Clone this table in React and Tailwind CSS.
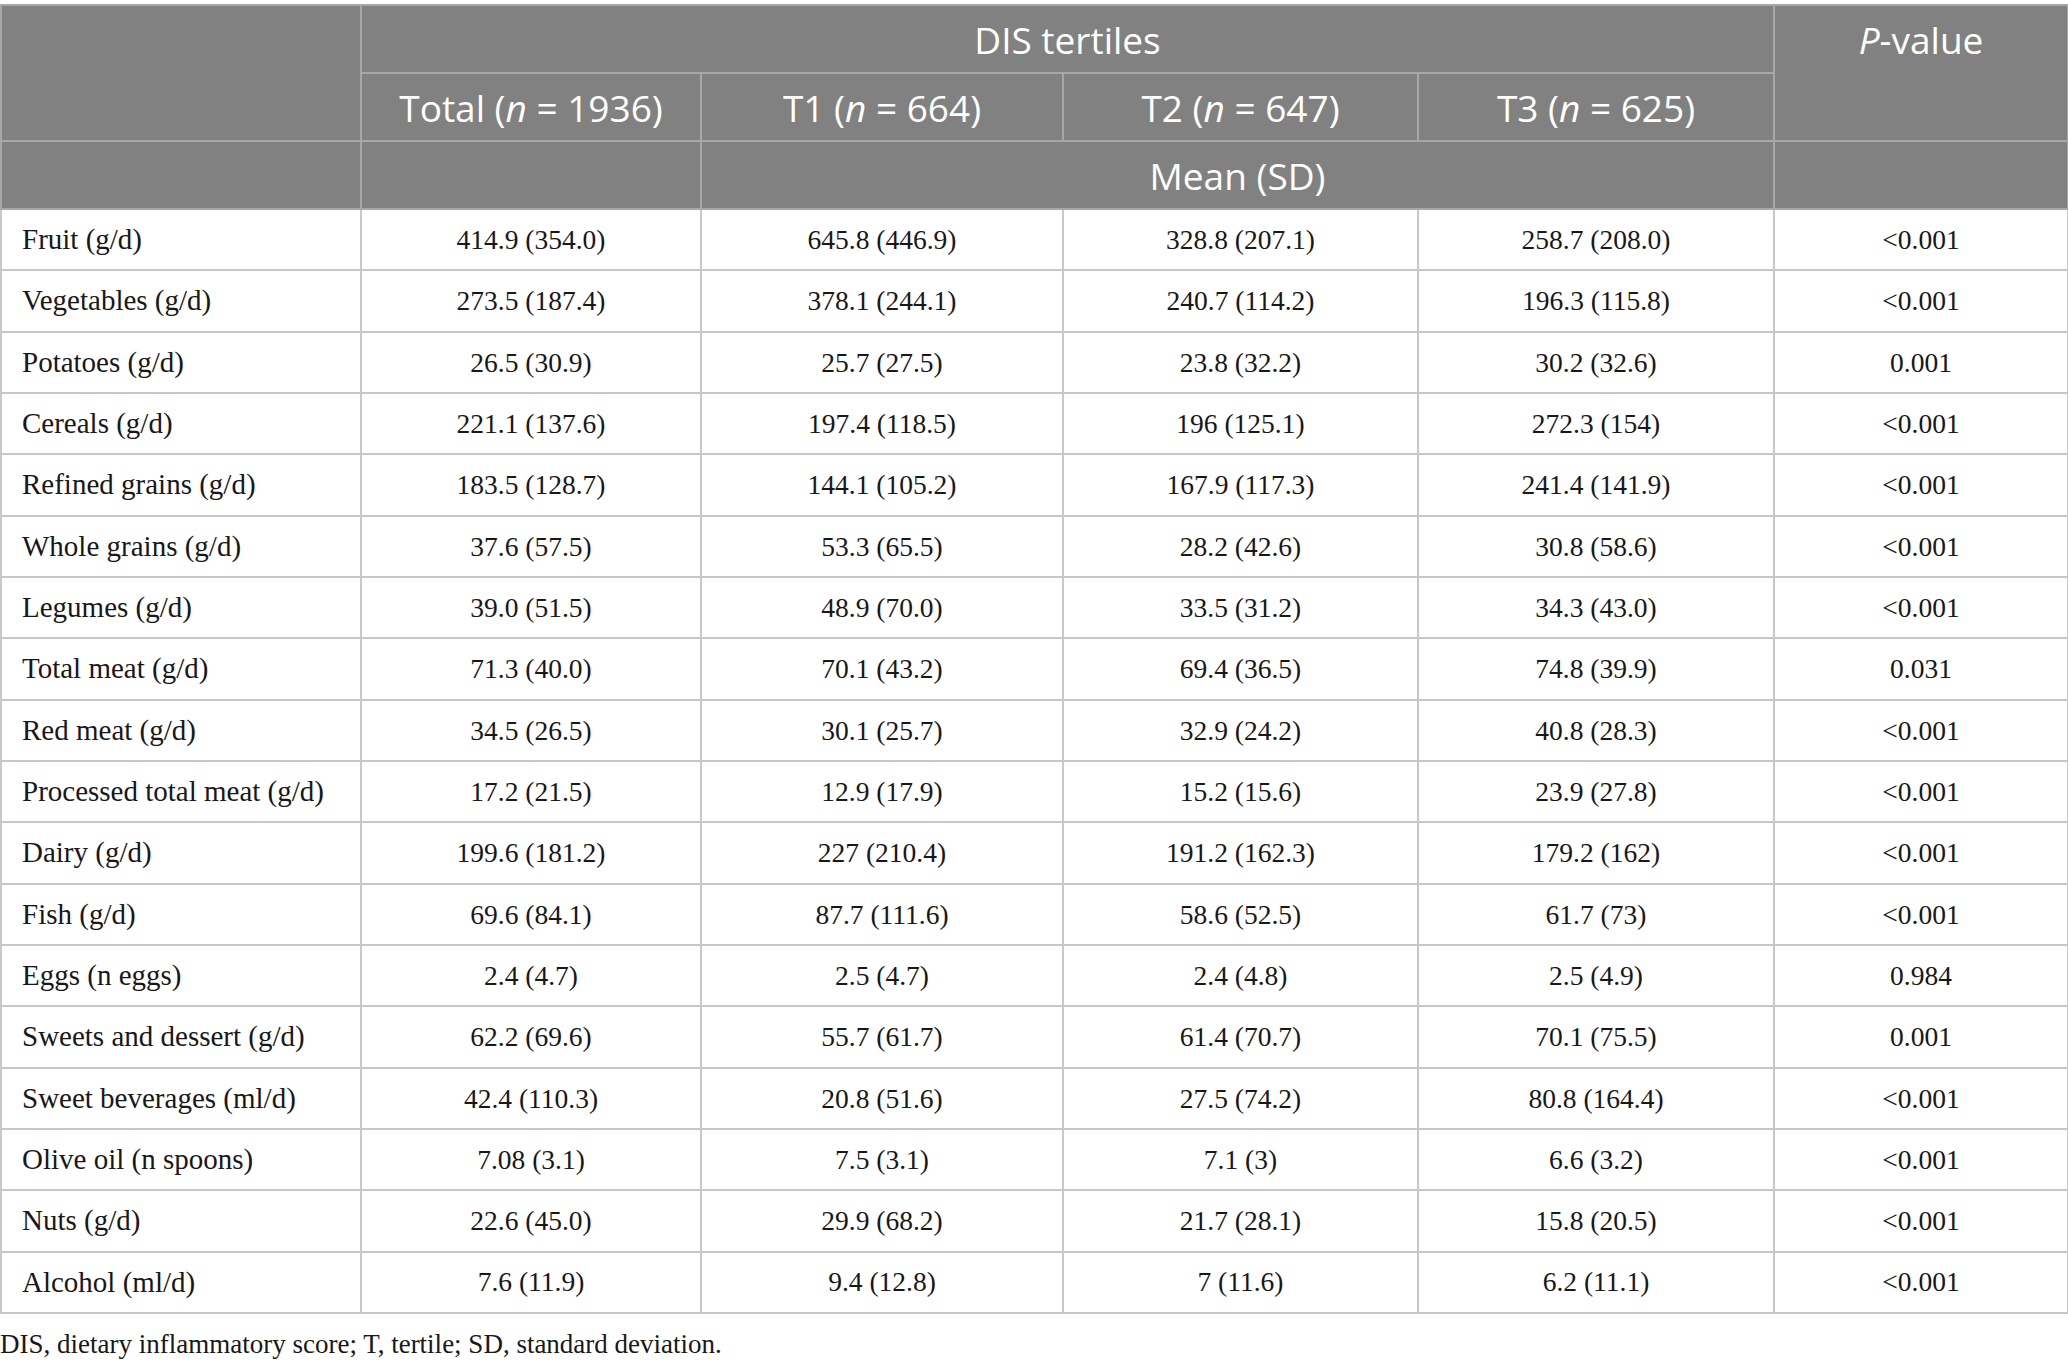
import React from 'react';

const rows = [
    ['Fruit (g/d)', '414.9 (354.0)', '645.8 (446.9)', '328.8 (207.1)', '258.7 (208.0)', '<0.001'],
    ['Vegetables (g/d)', '273.5 (187.4)', '378.1 (244.1)', '240.7 (114.2)', '196.3 (115.8)', '<0.001'],
    ['Potatoes (g/d)', '26.5 (30.9)', '25.7 (27.5)', '23.8 (32.2)', '30.2 (32.6)', '0.001'],
    ['Cereals (g/d)', '221.1 (137.6)', '197.4 (118.5)', '196 (125.1)', '272.3 (154)', '<0.001'],
    ['Refined grains (g/d)', '183.5 (128.7)', '144.1 (105.2)', '167.9 (117.3)', '241.4 (141.9)', '<0.001'],
    ['Whole grains (g/d)', '37.6 (57.5)', '53.3 (65.5)', '28.2 (42.6)', '30.8 (58.6)', '<0.001'],
    ['Legumes (g/d)', '39.0 (51.5)', '48.9 (70.0)', '33.5 (31.2)', '34.3 (43.0)', '<0.001'],
    ['Total meat (g/d)', '71.3 (40.0)', '70.1 (43.2)', '69.4 (36.5)', '74.8 (39.9)', '0.031'],
    ['Red meat (g/d)', '34.5 (26.5)', '30.1 (25.7)', '32.9 (24.2)', '40.8 (28.3)', '<0.001'],
    ['Processed total meat (g/d)', '17.2 (21.5)', '12.9 (17.9)', '15.2 (15.6)', '23.9 (27.8)', '<0.001'],
    ['Dairy (g/d)', '199.6 (181.2)', '227 (210.4)', '191.2 (162.3)', '179.2 (162)', '<0.001'],
    ['Fish (g/d)', '69.6 (84.1)', '87.7 (111.6)', '58.6 (52.5)', '61.7 (73)', '<0.001'],
    ['Eggs (n eggs)', '2.4 (4.7)', '2.5 (4.7)', '2.4 (4.8)', '2.5 (4.9)', '0.984'],
    ['Sweets and dessert (g/d)', '62.2 (69.6)', '55.7 (61.7)', '61.4 (70.7)', '70.1 (75.5)', '0.001'],
    ['Sweet beverages (ml/d)', '42.4 (110.3)', '20.8 (51.6)', '27.5 (74.2)', '80.8 (164.4)', '<0.001'],
    ['Olive oil (n spoons)', '7.08 (3.1)', '7.5 (3.1)', '7.1 (3)', '6.6 (3.2)', '<0.001'],
    ['Nuts (g/d)', '22.6 (45.0)', '29.9 (68.2)', '21.7 (28.1)', '15.8 (20.5)', '<0.001'],
    ['Alcohol (ml/d)', '7.6 (11.9)', '9.4 (12.8)', '7 (11.6)', '6.2 (11.1)', '<0.001'],
];

const th = "border-2 border-[#a6a7a6] font-normal text-white text-[37px] leading-none text-center";

const App = () => {
    return (
        <div className="w-[2068px] h-[1366px] bg-white pt-[4px]">
            <table className="table-fixed border-collapse w-[2067px] border-2 border-[#c2c2c2]">
                <colgroup>
                    <col className="w-[360px]" />
                    <col className="w-[340px]" />
                    <col className="w-[362px]" />
                    <col className="w-[355px]" />
                    <col className="w-[356px]" />
                    <col className="w-[294px]" />
                </colgroup>
                <thead className="bg-[#808180] font-['Open_Sans',sans-serif]">
                    <tr className="h-[68px]">
                        <th rowSpan={2} className={th}></th>
                        <th colSpan={4} className={th}>DIS tertiles</th>
                        <th rowSpan={2} className={`${th} align-top pt-[15px]`}><i>P</i>-value</th>
                    </tr>
                    <tr className="h-[68px]">
                        <th className={th}>Total (<i>n</i> = 1936)</th>
                        <th className={th}>T1 (<i>n</i> = 664)</th>
                        <th className={th}>T2 (<i>n</i> = 647)</th>
                        <th className={th}>T3 (<i>n</i> = 625)</th>
                    </tr>
                    <tr className="h-[68px]">
                        <th className={th}></th>
                        <th className={th}></th>
                        <th colSpan={3} className={th}>Mean (SD)</th>
                        <th className={th}></th>
                    </tr>
                </thead>
                <tbody className="font-['Liberation_Serif',serif] text-[#1a1718]">
                    {rows.map((r, i) => (
                        <tr key={i} className="h-[61.33px]">
                            {r.map((c, j) => (
                                <td key={j} className={`border-2 border-[#c8c8c8] leading-none ${j === 0 ? 'text-left pl-[20px] text-[29px]' : 'text-center text-[27.5px]'}`}>
                                    {c}
                                </td>
                            ))}
                        </tr>
                    ))}
                </tbody>
            </table>
            <p className="font-['Liberation_Serif',serif] text-[27px] text-[#1a1718] mt-[17px] leading-none">
                DIS, dietary inflammatory score; T, tertile; SD, standard deviation.
            </p>
        </div>
    );
};

export default App;
